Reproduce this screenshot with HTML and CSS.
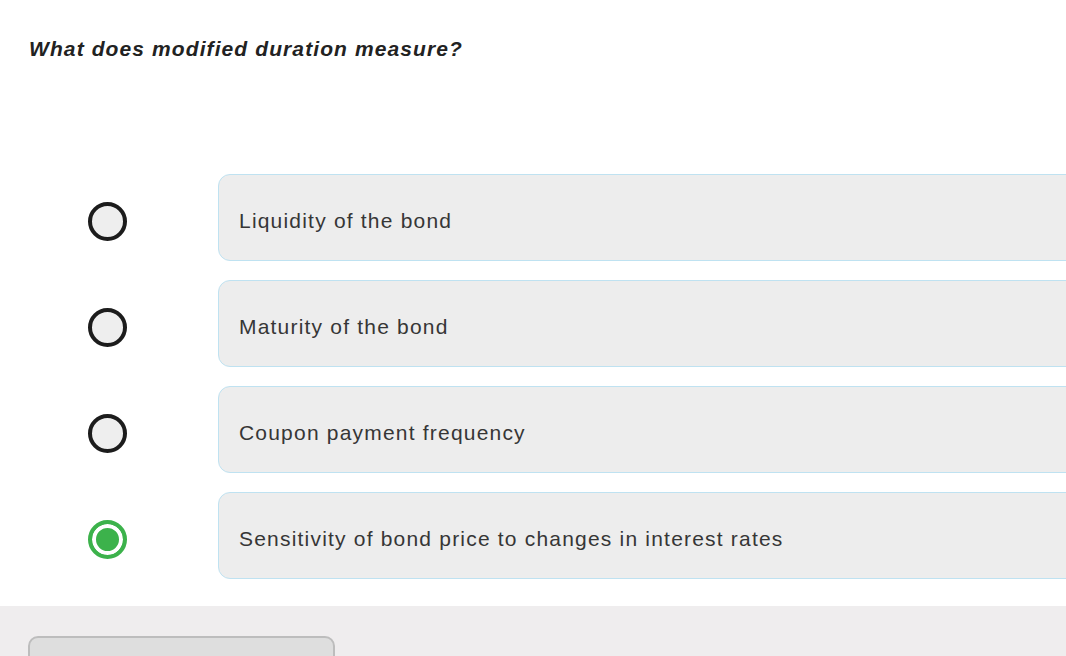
FILE: index.html
```html
<!DOCTYPE html>
<html lang="en">
<head>
<meta charset="utf-8">
<title>Quiz</title>
<link rel="stylesheet" href="styles.css">
</head>
<body>
<div class="page">
  <main class="question">
    <h1 class="question-title">What does modified duration measure?</h1>
    <ul class="options">
      <li class="option">
        <span class="radio"></span>
        <div class="card">Liquidity of the bond</div>
      </li>
      <li class="option">
        <span class="radio"></span>
        <div class="card">Maturity of the bond</div>
      </li>
      <li class="option">
        <span class="radio"></span>
        <div class="card">Coupon payment frequency</div>
      </li>
      <li class="option">
        <span class="radio radio-checked"></span>
        <div class="card">Sensitivity of bond price to changes in interest rates</div>
      </li>
    </ul>
  </main>
  <footer class="footer">
    <button class="footer-button" type="button"></button>
  </footer>
</div>
</body>
</html>
```

FILE: styles.css
```css
html, body {
  margin: 0;
  padding: 0;
  background: #ffffff;
  overflow: hidden;
  width: 1066px;
  height: 656px;
}

body {
  font-family: "Liberation Sans", Arial, Helvetica, sans-serif;
}

.page {
  display: flex;
  flex-direction: column;
  width: 1066px;
  height: 656px;
  overflow: hidden;
}

.question {
  padding: 37px 0 0 29px;
}

.question-title {
  margin: 0;
  font-size: 21px;
  line-height: 24px;
  font-weight: bold;
  font-style: italic;
  letter-spacing: 1.1px;
  color: #222222;
}

.options {
  list-style: none;
  margin: 113px 0 0 0;
  padding: 0;
  display: flex;
  flex-direction: column;
  gap: 19px;
}

.option {
  display: flex;
  align-items: center;
  height: 87px;
  margin-left: -29px;
}

.radio {
  flex: none;
  box-sizing: border-box;
  width: 39px;
  height: 39px;
  margin: 8px 91px 0 88px;
  border: 4px solid #1c1c1c;
  border-radius: 50%;
  background: #eeeeee;
}

.radio-checked {
  border-color: #3cb24b;
  background: #3cb24b;
  box-shadow: inset 0 0 0 4px #ffffff;
}

.card {
  flex: none;
  box-sizing: border-box;
  width: 1000px;
  height: 87px;
  display: flex;
  align-items: center;
  padding: 7px 0 0 20px;
  background: #ededed;
  border: 1.5px solid #bfe2f1;
  border-radius: 12px;
  font-size: 21px;
  letter-spacing: 1.2px;
  color: #363636;
}

.footer {
  margin-top: 27px;
  flex: 1;
  background: #efedee;
  padding: 30px 0 0 28px;
}

.footer-button {
  display: block;
  width: 307px;
  height: 48px;
  padding: 0;
  background: #dedede;
  border: 2px solid #bdbdbd;
  border-radius: 10px;
}
```
